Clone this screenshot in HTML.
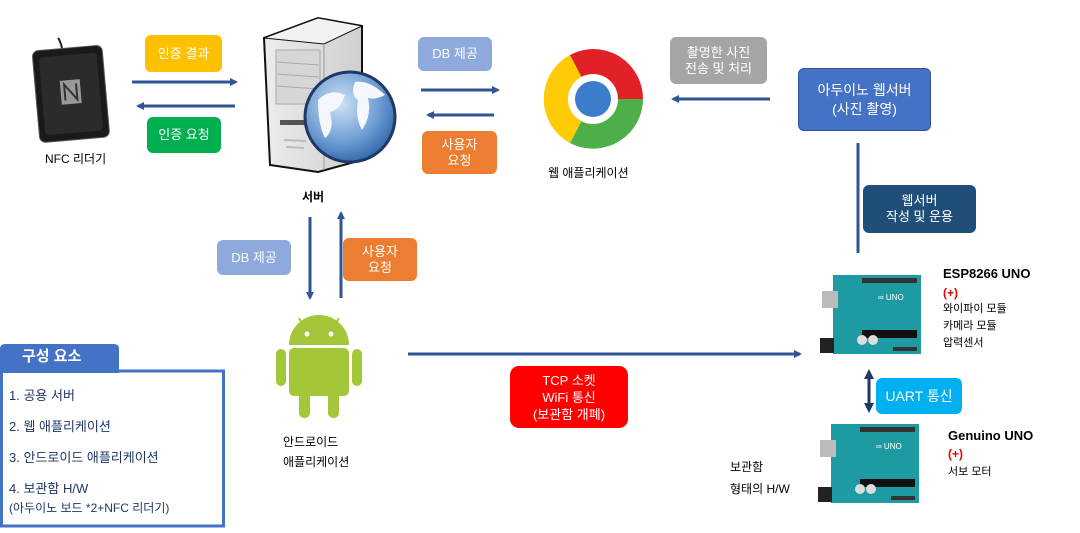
<!DOCTYPE html>
<html><head><meta charset="utf-8"><style>
*{margin:0;padding:0;box-sizing:border-box}
body{width:1080px;height:533px;background:#fff;position:relative;overflow:hidden;font-family:"Liberation Sans","Noto Sans CJK KR",sans-serif}
.b{position:absolute;color:#fff;font-size:13px;line-height:16px;text-align:center;display:flex;align-items:center;justify-content:center;border-radius:6px}
.t{position:absolute;font-size:12px;color:#000;white-space:nowrap}
svg{position:absolute;left:0;top:0}
</style></head><body>
<svg width="1080" height="533" viewBox="0 0 1080 533">
<defs>
<marker id="ah" markerWidth="8" markerHeight="8" refX="6" refY="4" orient="auto" markerUnits="userSpaceOnUse"><path d="M0,0 L8,4 L0,8z" fill="#2F5597"/></marker>
<marker id="ah2" markerWidth="10" markerHeight="10" refX="7" refY="5" orient="auto-start-reverse" markerUnits="userSpaceOnUse"><path d="M0,0 L10,5 L0,10z" fill="#1F3864"/></marker>
<radialGradient id="gl" cx="40%" cy="35%" r="70%"><stop offset="0" stop-color="#d0e2f4"/><stop offset="0.6" stop-color="#6f9fd4"/><stop offset="1" stop-color="#2d63a8"/></radialGradient>
<linearGradient id="sv" x1="0" x2="1"><stop offset="0" stop-color="#ececec"/><stop offset="1" stop-color="#cfcfcf"/></linearGradient>
</defs>
<g stroke="#2F5597" stroke-width="3">
<line x1="132" y1="82" x2="236" y2="82" marker-end="url(#ah)"/>
<line x1="235" y1="106" x2="138" y2="106" marker-end="url(#ah)"/>
<line x1="421" y1="90" x2="498" y2="90" marker-end="url(#ah)"/>
<line x1="494" y1="115" x2="428" y2="115" marker-end="url(#ah)"/>
<line x1="770" y1="99" x2="673" y2="99" marker-end="url(#ah)"/>
<line x1="310" y1="217" x2="310" y2="298" marker-end="url(#ah)"/>
<line x1="341" y1="298" x2="341" y2="213" marker-end="url(#ah)"/>
<line x1="408" y1="354" x2="800" y2="354" marker-end="url(#ah)"/>
<line x1="858" y1="143" x2="858" y2="253"/>
</g>
<line x1="869" y1="372" x2="869" y2="410" stroke="#1F3864" stroke-width="3" marker-start="url(#ah2)" marker-end="url(#ah2)"/>
<g transform="rotate(-5 70 95)">
<rect x="36" y="48" width="70" height="92" rx="6" fill="#1a1a1a" stroke="#555"/>
<rect x="42" y="55" width="58" height="78" rx="4" fill="#2b2b2b"/>
<rect x="61" y="80" width="20" height="24" fill="#999"/>
<path d="M65,100 V84 L77,100 V84" stroke="#333" stroke-width="2" fill="none"/>
</g>
<path d="M62,48 Q60,40 58,38" stroke="#222" stroke-width="2" fill="none"/>
<path d="M264,38 L318,18 L362,26 L362,160 L318,172 L270,165 Z" fill="url(#sv)" stroke="#111" stroke-width="2"/>
<path d="M264,38 L318,18 L362,26 L324,44 Z" fill="#f2f2f2" stroke="#111" stroke-width="1"/>
<line x1="324" y1="44" x2="324" y2="170" stroke="#999"/>
<rect x="276" y="50" width="44" height="54" fill="#d6d6d6" stroke="#aaa"/>
<g stroke="#aaa"><line x1="277" y1="62" x2="319" y2="65"/><line x1="277" y1="74" x2="319" y2="77"/><line x1="277" y1="86" x2="319" y2="89"/></g>
<rect x="280" y="120" width="28" height="5" fill="#555"/>
<g stroke="#bbb" stroke-width="2"><line x1="284" y1="140" x2="306" y2="141"/><line x1="286" y1="147" x2="304" y2="148"/></g>
<circle cx="350" cy="117" r="45" fill="url(#gl)" stroke="#1f3864" stroke-width="3"/>
<path d="M318,100 Q330,88 345,95 Q340,110 330,112 Q335,130 325,138 Q318,125 318,100Z M355,82 Q370,80 385,95 Q375,100 368,98 Q372,115 362,130 Q355,118 358,100 Q350,95 355,82Z" fill="#f4f7fb"/>
<path d="M593,99 L593,49 A50,50 0 0 1 643,99 Z" fill="#E02127"/>
<path d="M593,99 L643,99 A50,50 0 0 1 570,143 Z" fill="#4DAF47"/>
<path d="M593,99 L570,143 A50,50 0 0 1 570,55 Z" fill="#FFCB05"/>
<path d="M593,99 L570,55 A50,50 0 0 1 593,49 Z" fill="#E02127"/>
<circle cx="593" cy="99" r="25" fill="#fff"/>
<circle cx="593" cy="99" r="18" fill="#3B7DCB"/>
<g fill="#A4C639">
<path d="M289,345 A30,30 0 0 1 349,345 Z"/>
<rect x="289" y="348" width="60" height="48" rx="5"/>
<rect x="276" y="349" width="10" height="37" rx="5"/>
<rect x="352" y="349" width="10" height="37" rx="5"/>
<rect x="299" y="388" width="11" height="30" rx="5"/>
<rect x="328" y="388" width="11" height="30" rx="5"/>
<line x1="299" y1="318" x2="305" y2="328" stroke="#A4C639" stroke-width="2"/>
<line x1="339" y1="318" x2="333" y2="328" stroke="#A4C639" stroke-width="2"/>
</g>
<circle cx="307" cy="334" r="2.5" fill="#fff"/><circle cx="331" cy="334" r="2.5" fill="#fff"/>
<g id="ard">
<rect x="833" y="275" width="88" height="79" fill="#1E9AA3"/>
<rect x="822" y="291" width="16" height="17" fill="#bbb"/>
<rect x="820" y="338" width="14" height="15" fill="#222"/>
<rect x="862" y="278" width="55" height="5" fill="#333"/>
<rect x="862" y="330" width="55" height="8" fill="#111"/>
<circle cx="862" cy="340" r="5" fill="#ddd"/><circle cx="873" cy="340" r="5" fill="#ddd"/>
<text x="878" y="300" font-size="8" fill="#fff" font-family="Liberation Sans">∞ UNO</text>
<rect x="893" y="347" width="24" height="4" fill="#333"/>
</g>
<use href="#ard" transform="translate(-2,149)"/>
<rect x="1.5" y="371" width="222" height="155" fill="#fff" stroke="#4472C4" stroke-width="3"/>
<path d="M0,349 Q0,344 5,344 L114,344 Q119,344 119,349 L119,373 L0,373Z" fill="#4472C4"/>
</svg>

<div class="b" style="left:145px;top:35px;width:77px;height:37px;background:#FFC000">인증 결과</div>
<div class="b" style="left:147px;top:117px;width:74px;height:36px;background:#00B050">인증 요청</div>
<div class="t" style="left:45px;top:150px;font-size:12px">NFC 리더기</div>
<div class="t" style="left:302px;top:188px;font-weight:bold">서버</div>
<div class="b" style="left:418px;top:37px;width:74px;height:34px;background:#8EA9DB">DB 제공</div>
<div class="b" style="left:422px;top:131px;width:75px;height:43px;background:#ED7D31">사용자<br>요청</div>
<div class="t" style="left:548px;top:164px">웹 애플리케이션</div>
<div class="b" style="left:670px;top:37px;width:97px;height:47px;background:#A5A5A5">촬영한 사진<br>전송 및 처리</div>
<div class="b" style="left:798px;top:68px;width:133px;height:63px;background:#4472C4;border:1px solid #2F5597;font-size:14px;line-height:19px">아두이노 웹서버<br>(사진 촬영)</div>
<div class="b" style="left:863px;top:185px;width:113px;height:48px;background:#1F4E79">웹서버<br>작성 및 운용</div>
<div class="b" style="left:217px;top:240px;width:74px;height:35px;background:#8EA9DB">DB 제공</div>
<div class="b" style="left:343px;top:238px;width:74px;height:43px;background:#ED7D31">사용자<br>요청</div>
<div class="t" style="left:283px;top:432px;line-height:20px">안드로이드<br>애플리케이션</div>
<div class="b" style="left:510px;top:366px;width:118px;height:62px;background:#FF0000;border-radius:9px;font-size:13px;line-height:17px">TCP 소켓<br>WiFi 통신<br>(보관함 개폐)</div>
<div class="b" style="left:876px;top:378px;width:86px;height:36px;background:#00B0F0;font-size:14px">UART 통신</div>
<div class="t" style="left:943px;top:266px;font-weight:bold;font-size:13px">ESP8266 UNO</div>
<div class="t" style="left:943px;top:286px;font-weight:bold;color:#e00">(+)</div>
<div class="t" style="left:943px;top:301px;font-size:11px;line-height:17px">와이파이 모듈<br>카메라 모듈<br>압력센서</div>
<div class="t" style="left:948px;top:428px;font-weight:bold;font-size:13px">Genuino UNO</div>
<div class="t" style="left:948px;top:447px;font-weight:bold;color:#e00">(+)</div>
<div class="t" style="left:948px;top:463px;font-size:11px">서보 모터</div>
<div class="t" style="left:730px;top:456px;line-height:22px">보관함<br>형태의 H/W</div>
<div class="t" style="left:22px;top:345px;color:#fff;font-weight:bold;font-size:15px">구성 요소</div>
<div class="t" style="left:9px;top:380px;color:#1F3864;font-size:13px;line-height:31px">1. 공용 서버<br>2. 웹 애플리케이션<br>3. 안드로이드 애플리케이션<br>4. 보관함 H/W</div>
<div class="t" style="left:9px;top:499px;color:#1F3864;font-size:12px">(아두이노 보드 *2+NFC 리더기)</div>
</body></html>
